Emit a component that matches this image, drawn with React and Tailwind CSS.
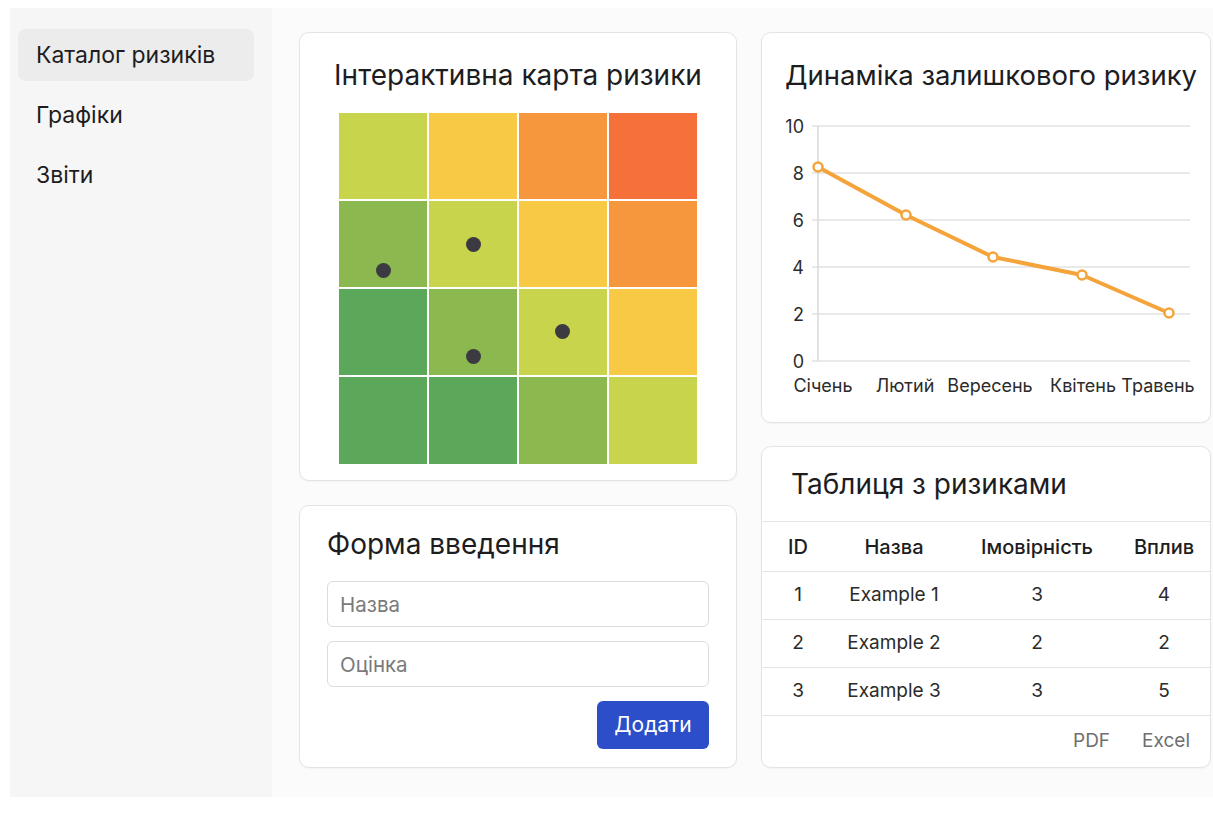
import React from "react";

const FONT = { fontFamily: "Inter, 'Noto Sans', 'Liberation Sans', sans-serif" };

const HEAT = [
  ["#c8d44c", "#f7c944", "#f7973d", "#f6713a"],
  ["#8cb94f", "#c8d44c", "#f7c944", "#f7973d"],
  ["#5ca85b", "#8cb94f", "#c8d44c", "#f7c944"],
  ["#5ca85b", "#5ca85b", "#8cb94f", "#c8d44c"],
];

const DOTS = [
  { left: "left-[37px]", top: "top-[150px]" },
  { left: "left-[127px]", top: "top-[124px]" },
  { left: "left-[216px]", top: "top-[211px]" },
  { left: "left-[127px]", top: "top-[236px]" },
];

const ROWS = [
  ["1", "Example 1", "3", "4"],
  ["2", "Example 2", "2", "2"],
  ["3", "Example 3", "3", "5"],
];

function Sidebar() {
  const items = ["Каталог ризиків", "Графіки", "Звіти"];
  return (
    <aside className="w-[262px] shrink-0 bg-[#f6f6f6] pl-2 pr-[18px] pt-[21px] flex flex-col gap-[8px]">
      {items.map((t, i) => (
        <div
          key={t}
          className={
            "h-[52px] rounded-lg pl-[18px] flex items-center text-[23px] text-[#1d1d1f] " +
            (i === 0 ? "bg-[#ececec]" : "")
          }
        >
          {t}
        </div>
      ))}
    </aside>
  );
}

function Card({ className, children }) {
  return (
    <div className={"bg-white border border-[#e4e4e4] rounded-[10px] shadow-[0_1px_2px_rgba(0,0,0,0.04)] " + className}>
      {children}
    </div>
  );
}

function HeatMap() {
  return (
    <Card className="h-[449px] flex flex-col items-center">
      <h2 className="mt-[24px] text-[28px] leading-[36px] text-[#1d1d1f]">Інтерактивна карта ризики</h2>
      <div className="relative mt-[20px] grid grid-cols-[88px_88px_88px_88px] grid-rows-[86px_86px_86px_87px] gap-[2px]">
        {HEAT.flat().map((c, i) => (
          <div key={i} style={{ backgroundColor: c }} />
        ))}
        {DOTS.map((d, i) => (
          <span key={i} className={"absolute w-[15px] h-[15px] rounded-full bg-[#3b3a41] " + d.left + " " + d.top} />
        ))}
      </div>
    </Card>
  );
}

function LineChart() {
  const grid = [
    { v: "10", y: 20 },
    { v: "8", y: 67 },
    { v: "6", y: 114 },
    { v: "4", y: 161 },
    { v: "2", y: 208 },
    { v: "0", y: 255 },
  ];
  const pts = [
    [57, 61],
    [145, 109],
    [232, 151],
    [321, 169],
    [408, 207],
  ];
  const labels = [
    ["Січень", 62],
    ["Лютий", 144],
    ["Вересень", 229],
    ["Квітень", 322],
    ["Травень", 397],
  ];
  return (
    <Card className="h-[391px] flex flex-col">
      <h2 className="mt-[24px] pl-[23px] text-[27.5px] leading-[36px] text-[#1d1d1f] whitespace-nowrap">
        Динаміка залишкового ризику
      </h2>
      <svg width="450" height="295" viewBox="0 0 450 295" className="mt-[13px] -ml-px" style={FONT}>
        {grid.map((g) => (
          <g key={g.v}>
            <line x1="51" x2="429" y1={g.y} y2={g.y} stroke="#e2e2e2" strokeWidth="1.5" />
            <text x="43" y={g.y} textAnchor="end" dominantBaseline="central" fontSize="18" fill="#2b2b2b">
              {g.v}
            </text>
          </g>
        ))}
        <line x1="57" x2="57" y1="20" y2="255" stroke="#d8d8d8" strokeWidth="1.5" />
        <polyline
          points={pts.map((p) => p.join(",")).join(" ")}
          fill="none"
          stroke="#f4a43a"
          strokeWidth="4"
          strokeLinejoin="round"
          strokeLinecap="round"
        />
        {pts.map((p, i) => (
          <circle key={i} cx={p[0]} cy={p[1]} r="4.5" fill="#fff" stroke="#f4a43a" strokeWidth="2.5" />
        ))}
        {labels.map(([t, x]) => (
          <text key={t} x={x} y="279" textAnchor="middle" dominantBaseline="central" fontSize="18" fill="#2b2b2b">
            {t}
          </text>
        ))}
      </svg>
    </Card>
  );
}

function InputForm() {
  const inputCls =
    "h-[46px] w-full rounded-md border border-[#dcdcdc] px-[12px] text-[20.5px] placeholder:text-[#7a7a7a] outline-none";
  return (
    <Card className="h-[263px] px-[27px] flex flex-col">
      <h2 className="mt-[20px] text-[28px] leading-[36px] text-[#1d1d1f]">Форма введення</h2>
      <div className="mt-[19px] flex flex-col gap-[14px]">
        <input placeholder="Назва" className={inputCls} style={FONT} />
        <input placeholder="Оцінка" className={inputCls} style={FONT} />
      </div>
      <div className="mt-[14px] flex justify-end">
        <button className="h-[48px] w-[112px] rounded-md bg-[#2c4ec8] text-white text-[21px]" style={FONT}>
          Додати
        </button>
      </div>
    </Card>
  );
}

function RiskTable() {
  const cols = "grid grid-cols-[72px_120px_166px_88px] items-center text-center";
  return (
    <Card className="h-[322px] flex flex-col overflow-hidden">
      <div className="h-[75px] shrink-0 pl-[29px] flex items-center border-b border-[#e6e6e6]">
        <h2 className="text-[28px] leading-[36px] text-[#1d1d1f]">Таблиця з ризиками</h2>
      </div>
      <div className={cols + " h-[50px] shrink-0 border-b border-[#e6e6e6] text-[20px] font-medium text-[#1d1d1f]"}>
        <span>ID</span>
        <span>Назва</span>
        <span>Імовірність</span>
        <span>Вплив</span>
      </div>
      {ROWS.map((r) => (
        <div key={r[0]} className={cols + " h-[48px] shrink-0 border-b border-[#e6e6e6] text-[19px] text-[#2b2b2b]"}>
          {r.map((c, i) => (
            <span key={i}>{c}</span>
          ))}
        </div>
      ))}
      <div className="flex-1 flex items-center justify-end gap-[32px] pr-[20px] text-[19px] text-[#6f6f6f]">
        <span>PDF</span>
        <span>Excel</span>
      </div>
    </Card>
  );
}

export default function App() {
  return (
    <div className="w-[1213px] h-[825px] bg-white pl-[10px] pt-[8px] overflow-hidden" style={FONT}>
      <div className="flex h-[789px]">
        <Sidebar />
        <main className="flex-1 bg-[#fbfbfb] pl-[27px] pt-[24px] grid grid-cols-[438px_450px] gap-x-[24px] items-start">
          <div className="flex flex-col gap-[24px]">
            <HeatMap />
            <InputForm />
          </div>
          <div className="flex flex-col gap-[23px]">
            <LineChart />
            <RiskTable />
          </div>
        </main>
      </div>
    </div>
  );
}
